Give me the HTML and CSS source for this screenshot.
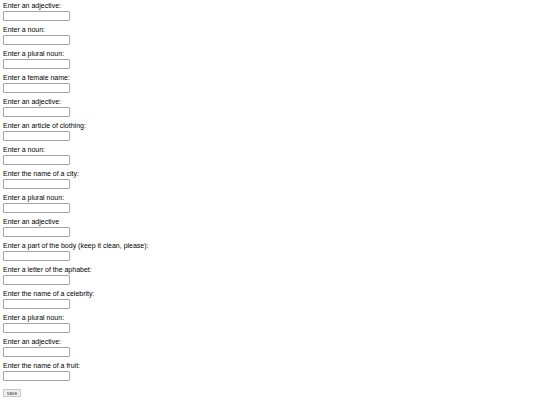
FILE: index.html
```html
<!DOCTYPE html>
<html>
<head>
<meta charset="utf-8">
<link rel="stylesheet" href="styles.css">
</head>
<body>
<form class="form">
  <div class="field"><label class="label">Enter an adjective:</label><input class="box" type="text"></div>
  <div class="field"><label class="label">Enter a noun:</label><input class="box" type="text"></div>
  <div class="field"><label class="label">Enter a plural noun:</label><input class="box" type="text"></div>
  <div class="field"><label class="label">Enter a female name:</label><input class="box" type="text"></div>
  <div class="field"><label class="label">Enter an adjective:</label><input class="box" type="text"></div>
  <div class="field"><label class="label">Enter an article of clothing:</label><input class="box" type="text"></div>
  <div class="field"><label class="label">Enter a noun:</label><input class="box" type="text"></div>
  <div class="field"><label class="label">Enter the name of a city:</label><input class="box" type="text"></div>
  <div class="field"><label class="label">Enter a plural noun:</label><input class="box" type="text"></div>
  <div class="field"><label class="label">Enter an adjective</label><input class="box" type="text"></div>
  <div class="field"><label class="label">Enter a part of the body (keep it clean, please):</label><input class="box" type="text"></div>
  <div class="field"><label class="label">Enter a letter of the aphabet:</label><input class="box" type="text"></div>
  <div class="field"><label class="label">Enter the name of a celebrity:</label><input class="box" type="text"></div>
  <div class="field"><label class="label">Enter a plural noun:</label><input class="box" type="text"></div>
  <div class="field"><label class="label">Enter an adjective:</label><input class="box" type="text"></div>
  <div class="field"><label class="label">Enter the name of a fruit:</label><input class="box" type="text"></div>
  <div class="actions"><button class="save" type="button">save</button></div>
</form>
</body>
</html>
```
FILE: styles.css
```css
html, body {
  margin: 0;
  padding: 0;
  background: #ffffff;
}
body {
  padding: 2px 3px;
  font-family: "Liberation Sans", Arial, sans-serif;
  font-size: 7px;
  color: #000000;
}
.form {
  display: flex;
  flex-direction: column;
  margin: 0;
}
.field {
  display: flex;
  flex-direction: column;
  align-items: flex-start;
  height: 24px;
}
.label {
  display: block;
  line-height: 8px;
  height: 8px;
  margin-bottom: 1px;
  white-space: nowrap;
}
.box {
  box-sizing: border-box;
  width: 67px;
  height: 10px;
  margin: 0;
  padding: 0 2px;
  border: 1px solid #a5a5a5;
  border-radius: 1px;
  background: #ffffff;
  font-size: 6px;
  font-family: inherit;
}
.actions {
  display: flex;
  padding-top: 3px;
}
.save {
  box-sizing: border-box;
  width: 18px;
  height: 8px;
  margin: 0;
  padding: 0;
  border: 1px solid #c4c4c4;
  border-radius: 1px;
  background: #efefef;
  color: #444444;
  font-family: inherit;
  font-size: 5px;
  line-height: 6px;
}
```
